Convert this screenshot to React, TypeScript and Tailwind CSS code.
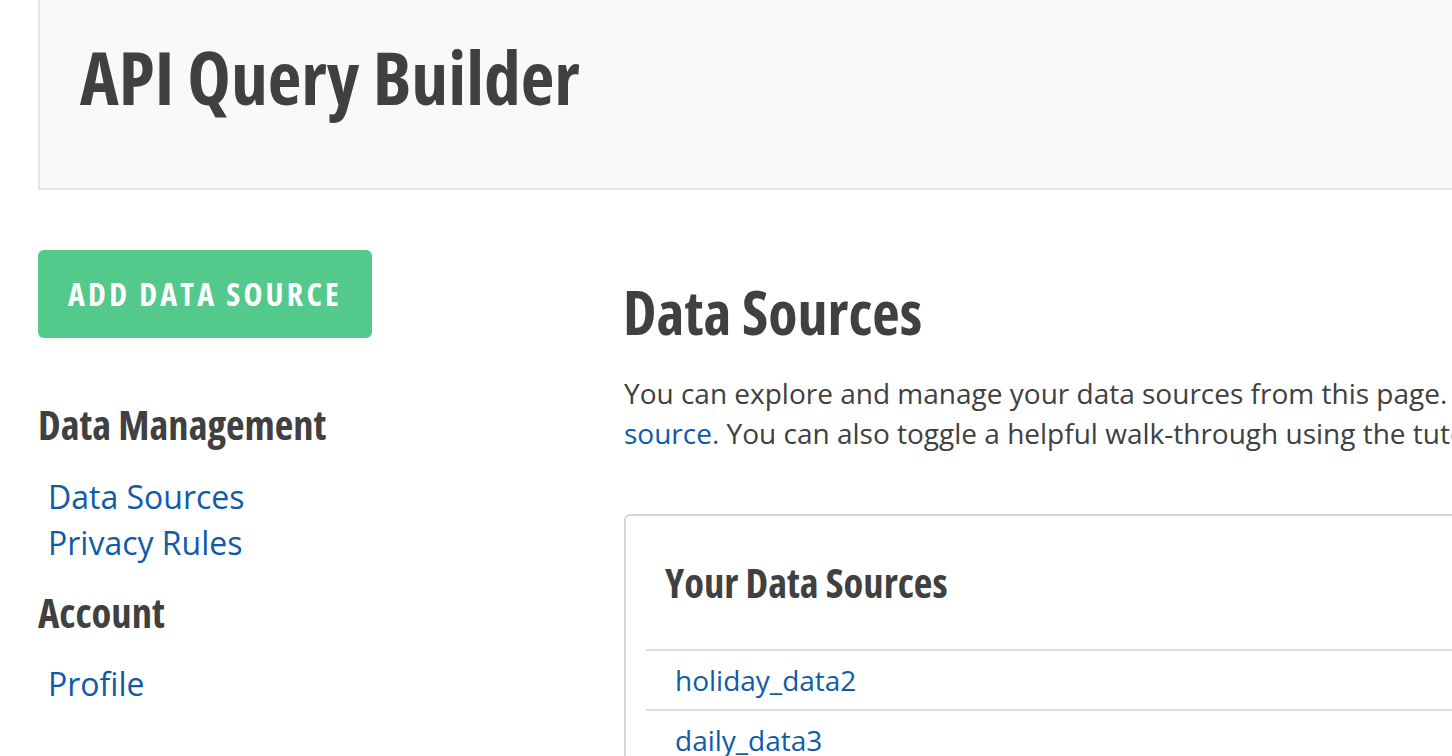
const dataSources = ["holiday_data2", "daily_data3"];

const SideHeading = ({ children, className = "" }: { children: string; className?: string }) => (
  <h3
    className={`font-['Open_Sans',sans-serif] font-bold font-stretch-condensed text-[40.5px] leading-none text-[#404040] ${className}`}
  >
    {children}
  </h3>
);

const SideLink = ({ children }: { children: string }) => (
  <li>
    <a href="#" className="pl-[10px] text-[#0f5ba7]">
      {children}
    </a>
  </li>
);

export default function App() {
  return (
    <div className="w-screen h-screen overflow-hidden bg-white font-['Open_Sans',sans-serif] text-[#404040]">
      {/* header */}
      <header className="ml-[38px] w-[1480px] h-[190px] bg-[#f9f9f8] border-l-2 border-b-2 border-[#e6e6e6] pl-[40px] pt-[40px]">
        <h1 className="font-bold font-stretch-condensed text-[73.5px] leading-none text-[#404040]">
          API Query Builder
        </h1>
      </header>

      <div className="flex pt-[60px]">
        {/* sidebar */}
        <aside className="ml-[38px] w-[586px] shrink-0">
          <button className="w-[334px] h-[88px] rounded-[6px] bg-[#54c98c] flex items-center justify-center text-white font-bold font-stretch-condensed text-[32px] leading-none tracking-[0.1em]">
            ADD DATA SOURCE
          </button>

          <SideHeading className="mt-[67px] mb-[28px]">Data Management</SideHeading>
          <ul className="text-[32px] leading-[46px]">
            <SideLink>Data Sources</SideLink>
            <SideLink>Privacy Rules</SideLink>
          </ul>

          <SideHeading className="mt-[27px] mb-[28px]">Account</SideHeading>
          <ul className="text-[32px] leading-[46px]">
            <SideLink>Profile</SideLink>
          </ul>
        </aside>

        {/* main */}
        <main className="w-[900px] shrink-0 pt-[32px]">
          <h2 className="-ml-[1px] font-bold font-stretch-condensed text-[60px] leading-none">Data Sources</h2>
          <p className="mt-[31px] text-[28px] leading-[40px] whitespace-nowrap">
            You can explore and manage your data sources from this page. To get started, add a new data
            <br />
            <a href="#" className="text-[#0f5ba7]">
              source.
            </a>{" "}
            You can also toggle a helpful walk-through using the tutorial mode.
          </p>

          <div className="mt-[61px] border-2 border-[#d5d5d5] rounded-[6px] p-[20px]">
            <h3 className="pl-[19px] pt-[27px] pb-[45px] font-bold font-stretch-condensed text-[40.5px] leading-none">
              Your Data Sources
            </h3>
            <ul className="text-[28px] leading-[40px]">
              {dataSources.map((name) => (
                <li key={name} className="border-t-2 border-[#dcdcdc] py-[9px] pl-[29px]">
                  <a href="#" className="text-[#0f5ba7]">
                    {name}
                  </a>
                </li>
              ))}
            </ul>
          </div>
        </main>
      </div>
    </div>
  );
}
